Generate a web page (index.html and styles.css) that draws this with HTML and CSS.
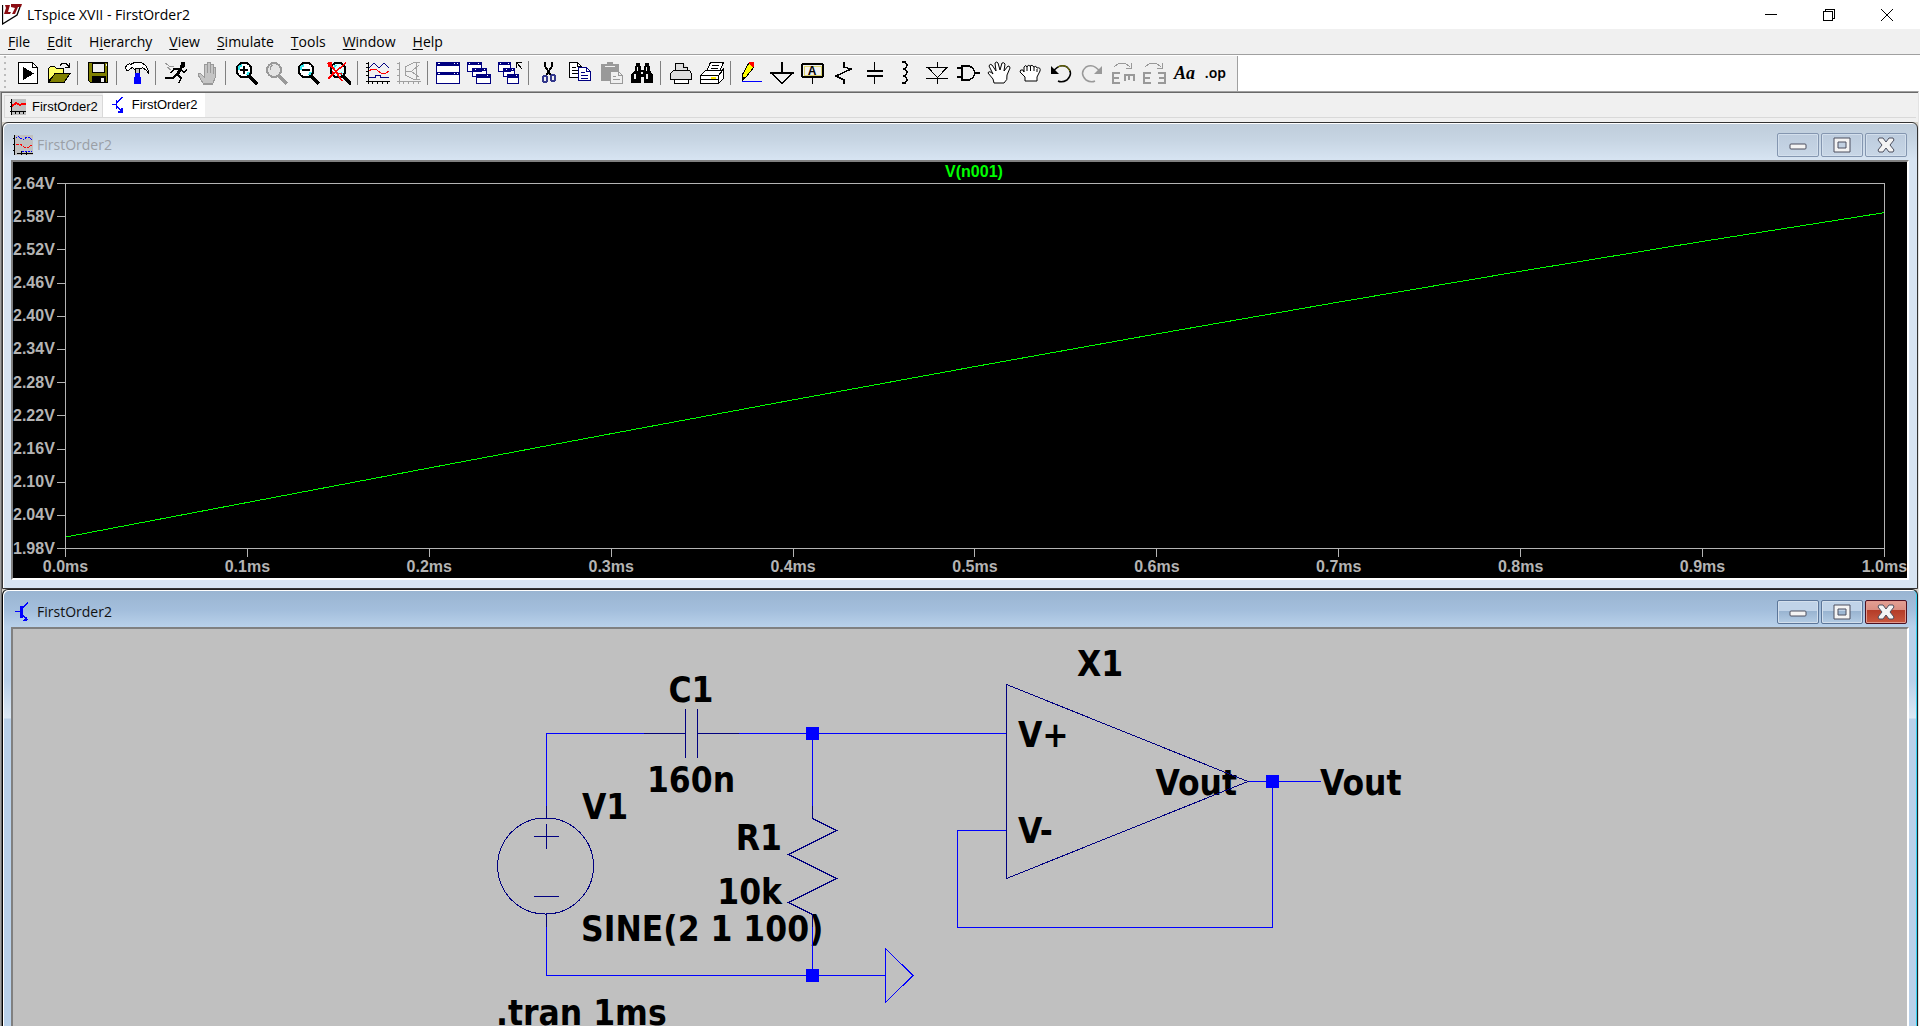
FILE: index.html
```html
<!DOCTYPE html>
<html lang="en">
<head>
<meta charset="utf-8">
<title>LTspice XVII - FirstOrder2</title>
<link rel="stylesheet" href="styles.css">
</head>
<body>
<header class="titlebar">
  <svg class="logo" viewBox="0 0 20 21"><path d="M.5 1v19L15 11 18 3" fill="none" stroke="#000" stroke-width="1.300"/><path d="M3 1H8L6 8h3l-1 2H2L4 4zM9 0H20L19 3H16L13 10H10L13 4 9 3z" fill="#8b0d12"/></svg>
  <h1 class="app-title">LTspice XVII - FirstOrder2</h1>
  <div class="app-controls">
    <button aria-label="Minimize"><svg viewBox="0 0 12 12"><path d="M0 5.500h12" fill="none" stroke="#000"/></svg></button>
    <button aria-label="Restore"><svg viewBox="0 0 12 12"><path d="M.5 2.500h9v9h-9zM2.500 2V.5h9v9H10" fill="none" stroke="#000"/></svg></button>
    <button aria-label="Close"><svg class="smooth" viewBox="0 0 12 12"><path d="M0 0 12 12M12 0 0 12" fill="none" stroke="#000"/></svg></button>
  </div>
</header>
<nav class="menubar" aria-label="Main menu">
  <button><u>F</u>ile</button><button><u>E</u>dit</button><button>H<u>i</u>erarchy</button><button><u>V</u>iew</button><button><u>S</u>imulate</button><button><u>T</u>ools</button><button><u>W</u>indow</button><button><u>H</u>elp</button>
</nav>
<div class="toolbar-row">
<div class="toolbar" role="toolbar" aria-label="Tools">
  <button aria-label="New schematic"><svg viewBox="0 0 24 24"><path d="M2.500 1.500h14l5 5v16h-19z" fill="#fff" stroke="#000"/><path d="M16.500 1.500v5h5" fill="none" stroke="#000"/><path d="M7 6v13l11-6.500z" fill="#000"/></svg></button>
  <button aria-label="Open"><svg viewBox="0 0 24 24"><path d="M1.500 20.500V7.500l2-2h4l2 2h7v5H8z" fill="#ff6" stroke="#000"/><path d="M1.500 21.500 8 12.500h15l-6 9z" fill="#808000" stroke="#000"/><path d="M13 4.500 15 2.500h4l3 3V2m0 4h-4" fill="none" stroke="#000"/></svg></button>
  <i class="sep"></i>
  <button aria-label="Save"><svg viewBox="0 0 24 24"><path d="M2.500 1.500h19v20h-17l-2-2z" fill="#808000" stroke="#000"/><path d="M6 2h12v9H6z" fill="#efefef" stroke="#000"/><path d="M6 15h14v7H6z" fill="#000"/><path d="M15 17h3v4h-3zM20 3h1v2h-1z" fill="#efefef"/></svg></button>
  <i class="sep"></i>
  <button aria-label="Control panel"><svg viewBox="0 0 24 24"><path d="M1.500 4.500 4.500 2.500 5.500 3.500 9.500 1.500h7l4 3 3 5v3l-2-3-4-3-3 2h-5l-2-2-2 1-2 2h-2l-1-3z" fill="#fff" stroke="#000"/><path d="M10.500 7.500h4v6h-4z" fill="#c0c0c0" stroke="#000"/><path d="M10 12h5v4h1v7h-7v-7h1z" fill="#00f"/></svg></button>
  <i class="sep"></i>
  <button aria-label="Run"><svg viewBox="0 0 24 24"><path d="M17 1h4v4l-2 2h-3z" fill="#000"/><path d="M17 7 13 14" fill="none" stroke="#000" stroke-width="3"/><path d="M13 13 17 17 15 22M13 13 9 17H1M16 8H10L7 12M17 9l3 2 3-2" fill="none" stroke="#000" stroke-width="1.500"/><path d="M1 2l4 3 5 1M3 6l4 3" fill="none" stroke="#999"/></svg></button>
  <button aria-label="Halt"><svg viewBox="0 0 24 24"><path d="M8 22h10l2-5V6h-2v7-10h-3v9-11h-3v11-9H9v13l-4-4H3v2z" fill="#c4c4c4" stroke="#999"/><path d="M8 22.500h10" stroke="#999" stroke-width="2"/></svg></button>
  <i class="sep"></i>
  <button aria-label="Zoom in"><svg viewBox="0 0 24 24"><circle cx="10" cy="9" r="7.500" fill="#fff" stroke="#000" stroke-width="2"/><path d="M5 9V6l3-2M15 11l-2 3" stroke="#2fe9ee" stroke-width="2" fill="none"/><path d="M6 9h8M10 5v8" stroke="#000" stroke-width="2"/><path d="m15 15 8 8" stroke="#000" stroke-width="4"/></svg></button>
  <button aria-label="Pan zoom"><svg viewBox="0 0 24 24"><circle cx="9" cy="9" r="7" fill="#e4e4e4" stroke="#999" stroke-width="2"/><path d="M5 9V6l3-2" stroke="#999" fill="none"/><path d="m14 15 8 8" stroke="#999" stroke-width="4"/></svg></button>
  <button aria-label="Zoom out"><svg viewBox="0 0 24 24"><circle cx="10" cy="9" r="7.500" fill="#fff" stroke="#000" stroke-width="2"/><path d="M5 9V6l3-2M15 11l-2 3" stroke="#2fe9ee" stroke-width="2" fill="none"/><path d="M6 9h8" stroke="#000" stroke-width="2"/><path d="m15 15 8 8" stroke="#000" stroke-width="4"/></svg></button>
  <button aria-label="Zoom full extents"><svg viewBox="0 0 24 24"><circle cx="11" cy="9" r="7.500" fill="#dff" stroke="#000" stroke-width="2"/><path d="M6 8l3-4M15 12l-2 2" stroke="#2fe9ee" stroke-width="2" fill="none"/><path d="m16 15 8 8" stroke="#000" stroke-width="4"/><path d="M1 2l6 6 8 12M19 2 6 13 1 18M5 11l10 2" stroke="#f00" stroke-width="1.500" fill="none"/><path d="M1 1h4v5H1z" fill="#f00"/></svg></button>
  <i class="sep"></i>
  <button aria-label="Autorange"><svg viewBox="0 0 24 24"><path d="M2.500 1v22M0 20.500h24M0 2.500h2M0 6.500h2M0 10.500h2M0 14.500h2M6.500 21v2M11.500 21v2M16.500 21v2M21.500 21v2" stroke="#000"/><path d="M3 7 8 2l5 5 5-5 5 5M3 16.500h6v-2h5v2h9" fill="none" stroke="#000080"/><path d="M3 10l3-2 5 1 4 3h5l3-2" fill="none" stroke="#f00"/></svg></button>
  <button aria-label="Smith chart"><svg viewBox="0 0 24 24"><path d="M2.500 1v22M0 20.500h24M0 2.500h2M0 8.500h2M0 14.500h2M6.500 21v2M11.500 21v2M16.500 21v2M21.500 21v2M23 1.500h-6L8 6v8l8 4h7M19.500 2v16M8 10.500h7M15 10l7-6M15 11l7 5" fill="none" stroke="#a0a0a0"/></svg></button>
  <i class="sep"></i>
  <button aria-label="Tile windows"><svg viewBox="0 0 24 24"><path d="M.5 1.500h23v10H.5zM.5 12.500h23v10H.5z" fill="#fff" stroke="#000080"/><path d="M0 1h24v4H0zM0 11h24v3H0z" fill="#000080"/><path d="M2 2h2v1H2zM18 2h1v1h-1zM21 2h1v1h-1zM2 12h2v1H2zM18 12h1v1h-1zM21 12h1v1h-1z" fill="#fff"/></svg></button>
  <button aria-label="Cascade windows"><svg viewBox="0 0 24 24"><path d="M.5 1.500h14v9H.5zM5.500 7.500h14v8h-14zM9.500 13.500h14v9h-14z" fill="#fff" stroke="#000080"/><path d="M0 1h15v3H0zM5 7h15v3H5zM9 13h15v4H9z" fill="#000080"/><path d="M2 2h1v1H2zM11 2h1v1h-1zM8 8h1v1H8zM17 8h1v1h-1zM20 14h1v1h-1z" fill="#fff"/></svg></button>
  <button aria-label="Close windows"><svg viewBox="0 0 24 24"><path d="M.5 1.500h12v9H.5zM5.500 7.500h11v8h-11zM9.500 13.500h11v9h-11z" fill="#fff" stroke="#000080"/><path d="M0 1h13v3H0zM5 7h12v3H5zM9 13h12v4H9z" fill="#000080"/><path d="M2 2h1v1H2zM10 2h1v1h-1zM8 8h1v1H8zM14 8h1v1h-1zM18 14h1v1h-1z" fill="#fff"/><path d="M18 1.500h6M18.500 1v6M19 2l5 6" stroke="#000" fill="none"/></svg></button>
  <i class="sep"></i>
  <button aria-label="Cut"><svg viewBox="0 0 24 24"><path d="M8 1v4l6 10M15 1v4L9 15" stroke="#000" stroke-width="2" fill="none"/><ellipse cx="8" cy="18" rx="2.500" ry="3.500" fill="none" stroke="#33388c" stroke-width="2"/><ellipse cx="16" cy="17" rx="2.500" ry="3.500" fill="none" stroke="#33388c" stroke-width="2"/></svg></button>
  <button aria-label="Copy"><svg viewBox="0 0 24 24"><path d="M1.500 1.500h8l4 4v11h-12z" fill="#fff" stroke="#000"/><path d="M9.500 1.500v4h4M4 6.500h4M4 9.500h6M4 12.500h6" fill="none" stroke="#000"/><path d="M10.500 6.500h8l4 4v9h-12z" fill="#fff" stroke="#000080"/><path d="M18.500 6.500v4h4M13 11.500h4M13 14.500h7M13 17.500h7" fill="none" stroke="#000080"/></svg></button>
  <button aria-label="Paste"><svg viewBox="0 0 24 24"><path d="M2 3h6V1h6v2h6v17H2z" fill="#999"/><path d="M6 5.500h10" stroke="#efefef"/><path d="M11.500 10.500h8l4 4v8h-12z" fill="#efefef" stroke="#999"/><path d="M19.500 10.500v4h4M14 15.500h3M14 18.500h7" fill="none" stroke="#999"/></svg></button>
  <button aria-label="Find"><svg viewBox="0 0 24 24"><path d="M6 2h4v3h1v4h3V5h1V2h4v3h1v4l3 5v8h-9v-6h-3v6H1v-8l4-5V5h1z" fill="#000"/><path d="M7 6h1v4H7zM16 6h1v4h-1zM4 13h2v5H4zM16 13h2v5h-2zM11 11h2v2h-2z" fill="#efefef"/></svg></button>
  <i class="sep"></i>
  <button aria-label="Print"><svg viewBox="0 0 24 24"><path d="M6.500 10V2.500h8l4 4V10" fill="#ddd" stroke="#000"/><path d="M14.500 2v4h4M4.500 9.500h16l2 3v6h-3v4h-14v-4h-4v-6z" fill="#ddd" stroke="#000"/><path d="M5.500 18.500h14v4h-14z" fill="#fff" stroke="#000"/></svg></button>
  <button aria-label="Print setup"><svg viewBox="0 0 24 24"><path d="M6.500 10 10.500 1.500h13L19.500 10M.5 14.500l5-5h16l2-2v10l-5 5h-18z" fill="#fff" stroke="#000"/><path d="M.5 14.500h18l5-6M18.500 15v8M12 4.500h7M11 7.500h7M0 18.500h18" fill="none" stroke="#000"/><path d="M11 16.500h5" stroke="#ffe900" stroke-width="2"/></svg></button>
  <i class="sep"></i>
  <button aria-label="Draw wire"><svg viewBox="0 0 24 24"><path d="M3.500 18.500v-5l6-11h5v4l-7 9z" fill="#ff0" stroke="#000"/><path d="M3 20v-5l4 2z" fill="#000"/><path d="M10 1h5v5h-2l-3-3z" fill="#f00"/><path d="M3 20.500h20" stroke="#00f"/></svg></button>
  <button aria-label="Ground"><svg viewBox="0 0 24 24"><path d="M12 1v11M1 12h22L12 22z" fill="none" stroke="#000" stroke-width="1.500"/></svg></button>
  <button aria-label="Label net"><svg viewBox="0 0 24 24"><rect x="1" y="3" width="21" height="13" rx="2" fill="#efefef" stroke="#000" stroke-width="2"/><path d="M3 5h17v9H3z" fill="none" stroke="#dcd36a"/><path d="M11.500 16v7" stroke="#000"/><text class="icon-text" x="11" y="14" text-anchor="middle">A</text></svg></button>
  <button aria-label="Resistor"><svg viewBox="0 0 24 24"><path d="M12 1v5l7 2L4 15l8 4v4" fill="none" stroke="#000" stroke-width="1.500"/></svg></button>
  <button aria-label="Capacitor"><svg viewBox="0 0 24 24"><path d="M11.500 1v9M11.500 16v7" stroke="#000"/><path d="M4 10h16M4 15h16" stroke="#000" stroke-width="2"/></svg></button>
  <button aria-label="Inductor"><svg viewBox="0 0 24 24"><path d="M8 1h3q4 3 0 7H9h2q4 3 0 7H9h2q4 4 0 7H8" fill="none" stroke="#000" stroke-width="1.500"/></svg></button>
  <button aria-label="Diode"><svg viewBox="0 0 24 24"><path d="M12.500 1v5M12.500 17v6M1 6.500h22M3 6.500 12.500 16.500 22 6.500M1 17.500h22" fill="none" stroke="#000"/></svg></button>
  <button aria-label="Component"><svg viewBox="0 0 24 24"><path d="M6 5h7q5 2 6 7-1 5-6 7H6zM1 7h5M1 16h5M19 12h5" fill="none" stroke="#000" stroke-width="1.500"/></svg></button>
  <button aria-label="Move"><svg class="smooth" viewBox="0 0 24 24"><path d="M7 22 6 18 1 12q1-3 5 1L2 5q1-3 3-1l4 6L8 2q2-2 3 0l2 7 2-7q2-1 3 1l-1 7 4-5q2 0 2 2l-3 7q1 5-3 8z" fill="#fff" stroke="#000"/></svg></button>
  <button aria-label="Drag"><svg class="smooth" viewBox="0 0 24 24"><path d="M7 20v-4L2 11q0-3 3-2l1 2V6q2-3 3 0 1-3 3-1 2-2 4 1 2-2 3 1 4-1 3 3l-3 6v4z" fill="#fff" stroke="#000"/><path d="M9 6v4M12.500 5v5M16 6v4M19 8v3" stroke="#000"/></svg></button>
  <button aria-label="Undo"><svg class="smooth" viewBox="0 0 24 24"><path d="M4 11Q10 2 18 6q7 6 0 13-5 3-9 1" fill="none" stroke="#000" stroke-width="1.500"/><path d="M9 6q8-4 12 4" fill="none" stroke="#808000"/><path d="M2 5v8h8z" fill="#000"/></svg></button>
  <button aria-label="Redo"><svg class="smooth" viewBox="0 0 24 24"><path d="M20 11Q14 2 6 6q-7 6 0 13 5 3 9 1" fill="none" stroke="#999" stroke-width="1.500"/><path d="M22 5v8h-8z" fill="#999"/></svg></button>
  <button aria-label="Rotate"><svg viewBox="0 0 24 24"><path d="M9 11.500H2v10h7M2 16.500h6M13.500 20v-6h9v6M18 14v5" fill="none" stroke="#999" stroke-width="2"/><path d="M3 6l5-4h6l5 4M20 2v5h-5" fill="none" stroke="#999"/></svg></button>
  <button aria-label="Mirror"><svg viewBox="0 0 24 24"><path d="M9 11.500H2v10h7M2 16.500h6M16 11.500h7v10h-7M17 16.500h6" fill="none" stroke="#999" stroke-width="2"/><path d="M3 6l5-4h6l5 4M20 2v5h-5" fill="none" stroke="#999"/></svg></button>
  <button class="text-tool">Aa</button>
  <button class="directive-tool">.op</button>
</div>
</div>
<div class="workspace">
<div class="tabs" role="tablist">
  <button class="tab" role="tab"><svg viewBox="0 0 16 16"><path d="M1 0h15v16H1z" fill="#c0c0c0"/><path d="M1.500 0v16M0 12.500h16M0 3.500h1M0 7.500h1M5.500 13v2M9.500 13v2M13.500 13v2" stroke="#000"/><path d="M2 7l4-3 4 2 2-1h4" fill="none" stroke="#f00" stroke-width="2"/></svg>FirstOrder2</button>
  <button class="tab active" role="tab" aria-selected="true"><svg viewBox="0 0 16 16"><path d="M4.500 3v9M0 7.500h4M5 6l5-6M5 9l5 6M10 11v4H6" fill="none" stroke="#00f" stroke-width="1.500"/></svg>FirstOrder2</button>
</div>
<main class="mdi">
<section class="win">
  <div class="win-title">
    <svg class="win-icon" viewBox="0 0 20 20"><path d="M1 0h19v20H1z" fill="#c0c0c0"/><path d="M1.500 0v20M0 3.500h1M0 9.500h1M0 15.500h1M4 18.500h16M8.500 16v4M13.500 16v4" stroke="#000"/><path d="M3 3l2-2 5 4 4-3h2l3 3M9 16.500h10" fill="none" stroke="#00f" stroke-dasharray="2 1"/><path d="M3 10l4-1 4 3h5l3-2" fill="none" stroke="#f00" stroke-dasharray="3 1"/></svg>
    <h2>FirstOrder2</h2>
    <div class="win-buttons">
      <button aria-label="Minimize"><svg viewBox="0 0 18 16"><rect class="glyph" x="1" y="7" width="16" height="5" rx="1"/></svg></button>
      <button aria-label="Maximize"><svg viewBox="0 0 18 16"><path class="glyph" fill-rule="evenodd" d="M1 1h16v14H1zM5 5v6h8V5z"/></svg></button>
      <button aria-label="Close"><svg viewBox="0 0 18 16"><path class="glyph" d="M2 1h4l3 4 3-4h4l1 2-4 5 4 5-1 2h-4l-3-4-3 4H2l-1-2 4-5-4-5z"/></svg></button>
    </div>
  </div>
  <div class="client plot">
    <h3 class="trace">V(n001)</h3>
    <ul class="y-axis"><li>2.64V</li><li>2.58V</li><li>2.52V</li><li>2.46V</li><li>2.40V</li><li>2.34V</li><li>2.28V</li><li>2.22V</li><li>2.16V</li><li>2.10V</li><li>2.04V</li><li>1.98V</li></ul>
    <div class="plot-area"><svg viewBox="0 0 1000 365" preserveAspectRatio="none"><polyline vector-effect="non-scaling-stroke" fill="none" stroke="#0f0" points="0,353.9 100,319.2 200,284.6 300,250.3 400,216.4 500,183 600,150.3 700,118.4 800,87.5 900,57.6 1000,28.8"/></svg></div>
    <ul class="x-axis"><li>0.0ms</li><li>0.1ms</li><li>0.2ms</li><li>0.3ms</li><li>0.4ms</li><li>0.5ms</li><li>0.6ms</li><li>0.7ms</li><li>0.8ms</li><li>0.9ms</li><li>1.0ms</li></ul>
  </div>
</section>
<section class="win current">
  <div class="win-title">
    <svg class="win-icon" viewBox="0 0 20 20"><path d="M8 4v12" stroke="#00f" stroke-width="3"/><path d="M2 9.500h5M9 6l6-5M9 12l5 6" fill="none" stroke="#00f" stroke-width="1.500"/><path d="M14 14v5h-5z" fill="#00f"/></svg>
    <h2>FirstOrder2</h2>
    <div class="win-buttons">
      <button aria-label="Minimize"><svg viewBox="0 0 18 16"><rect class="glyph" x="1" y="7" width="16" height="5" rx="1"/></svg></button>
      <button aria-label="Maximize"><svg viewBox="0 0 18 16"><path class="glyph" fill-rule="evenodd" d="M1 1h16v14H1zM5 5v6h8V5z"/></svg></button>
      <button class="close" aria-label="Close"><svg viewBox="0 0 18 16"><path class="glyph" d="M2 1h4l3 4 3-4h4l1 2-4 5 4 5-1 2h-4l-3-4-3 4H2l-1-2 4-5-4-5z"/></svg></button>
    </div>
  </div>
  <div class="client schematic">
    <svg role="img" aria-label="Schematic">
      <g transform="translate(-13 -629)">
        <g class="labels">
          <text x="691" y="702" text-anchor="middle">C1</text>
          <text x="691" y="792" text-anchor="middle">160n</text>
          <text x="582" y="819">V1</text>
          <text x="782" y="850" text-anchor="end">R1</text>
          <text x="782" y="904" text-anchor="end">10k</text>
          <text x="581" y="941">SINE(2 1 100)</text>
          <text x="496" y="1025">.tran 1ms</text>
          <text x="1100" y="676" text-anchor="middle">X1</text>
          <text x="1018" y="747">V+</text>
          <text x="1018" y="843">V-</text>
          <text x="1237" y="795" text-anchor="end">Vout</text>
          <text x="1320" y="795">Vout</text>
        </g>
        <path class="wire" d="M546.500 806V733.500H644M739 733.500H1006M812.500 733V806M812.500 927V975M546.500 927V975.500H885M1006 830.500H957.500V927.500H1272.500V781M1248 781.500H1321M885.500 948.500V1002.500L913 975.500Z"/>
        <path class="part" d="M546.500 806V818M546.500 914V927M644 733.500H685M698 733.500H739M685.500 709V758M697.500 709V758M812.500 806V818.500L836.500 830.500 788.500 854.500 836.500 878.500 788.500 902.500 812.500 914.500V927M534 836.500H559M546.500 824V849M534 896.500H559M1006.500 684.500V878.500L1248 781.500Z"/>
        <circle class="part" cx="545.500" cy="866" r="48"/>
        <path class="node" d="M806 727h13v13h-13zM806 969h13v13h-13zM1266 775h13v13h-13z"/>
      </g>
    </svg>
  </div>
</section>
</main>
</div>
</body>
</html>
```
FILE: styles.css
```css
* { box-sizing: border-box; }
html, body { height: 100%; }
body {
  margin: 0;
  display: flex;
  flex-direction: column;
  overflow: hidden;
  background: #fff;
  color: #000;
  font: 14px/20px "Open Sans", "Noto Sans", sans-serif;
}
h1, h2, h3, ul { margin: 0; padding: 0; font: inherit; list-style: none; }
button { margin: 0; padding: 0; border: 0; background: none; color: inherit; font: inherit; }
svg { display: block; shape-rendering: crispEdges; }
.smooth { shape-rendering: auto; }

.titlebar { display: flex; align-items: center; height: 29px; padding: 0 4px 0 2px; }
.logo { width: 20px; height: 21px; shape-rendering: auto; }
.app-title { padding-left: 5px; }
.app-controls { display: flex; margin-left: auto; }
.app-controls button { display: grid; place-items: center; width: 58px; height: 27px; }
.app-controls svg { width: 12px; height: 12px; }

.menubar {
  display: flex;
  gap: 17px;
  height: 26px;
  padding: 0 8px;
  background: #f0f0f0;
  border-bottom: 1px solid #a0a0a0;
}
.menubar u { text-decoration: underline 1px #000; text-underline-offset: 2px; text-decoration-skip-ink: none; }

.toolbar-row { display: flex; height: 36px; padding-top: 1px; }
.toolbar {
  display: flex;
  align-items: flex-start;
  padding: 0 6px 0 12px;
  background: radial-gradient(circle, #bbb 1px, transparent 1px) 3px 4px / 4px 6px repeat-y #f0f0f0;
  border-right: 1px solid #a0a0a0;
}
.toolbar button { display: grid; place-items: center; width: 31px; height: 34px; }
.toolbar svg { width: 24px; height: 24px; }
.sep { width: 1px; height: 24px; margin: 5px 4px 0 3px; background: #808080; }
.icon-text { font: bold 12px "Liberation Sans", sans-serif; }
.toolbar .text-tool { font: italic bold 18px/24px "Liberation Serif", serif; }
.toolbar .directive-tool { font: 600 14px/24px "Noto Sans", sans-serif; }

.workspace {
  flex: 1;
  min-height: 0;
  display: flex;
  flex-direction: column;
  margin-right: 1px;
  border-style: solid;
  border-color: #a0a0a0 #e3e3e3 #a0a0a0 #a0a0a0;
  border-width: 1px 1px 0;
  background: #f0f0f0;
  box-shadow: inset 1px 1px #696969;
  padding: 1px 0 0 1px;
}
.tabs {
  display: flex;
  align-items: flex-end;
  height: 25px;
  margin: 0 2px 0 2px;
  border-bottom: 1px solid #d9d9d9;
}
.tab {
  display: flex;
  align-items: center;
  gap: 6px;
  height: 22px;
  padding: 0 4px 0 5px;
  border: 1px solid #d9d9d9;
  border-bottom: 0;
  font: 13px/16px "Liberation Sans", Arial, sans-serif;
}
.tab.active { height: 24px; padding: 0 7px 2px 8px; gap: 4px; background: #fff; align-self: flex-start; border-color: #fff; }
.tab svg { width: 16px; height: 16px; }

.mdi {
  flex: 1;
  min-height: 0;
  display: grid;
  grid-template-rows: 31fr 29fr;
  margin-top: 4px;
  background: #d4d0c8;
}
.win {
  min-height: 0;
  display: flex;
  flex-direction: column;
  padding: 0 8px 8px;
  border: 1px solid #333;
  border-radius: 6px 6px 0 0;
  box-shadow: inset 1px 1px #fff;
  background: linear-gradient(#bfcddb, #c6d4e2 16px, #d7e4f2 37px);
}
.win.current {
  padding-bottom: 0;
  border-color: #222 #222 #222 #000;
  border-bottom: 0;
  box-shadow: inset 1px 1px #fff, inset -1px 0 #35d2f2;
  background: linear-gradient(#99b4d1, #a3bedc 20px, #b9d1ea 37px, #b9d1ea 90px, #dce8f4 128px, #b9d1ea 129px);
}
.win-title { display: flex; align-items: center; height: 37px; padding: 6px 2px 0; color: #9a9fa6; }
.current .win-title { color: #111; }
.win-icon { width: 20px; height: 20px; }
.win-title h2 { padding-left: 4px; }
.win-buttons { display: flex; gap: 2px; margin-left: auto; }
.win-buttons button {
  display: grid;
  place-items: center;
  width: 42px;
  height: 24px;
  border: 1px solid #8496b0;
  border-radius: 2px;
  box-shadow: inset 0 0 0 1px #d3dfec;
  background: linear-gradient(#bccbdd, #c8d6e6);
}
.current .win-buttons button { border-color: #5c7699; background: linear-gradient(#c0d3e8 45%, #98b3d0 45%, #b4cce4); }
.current .win-buttons .close { border-color: #4c1020; box-shadow: inset 0 0 0 1px #e29a8e; background: linear-gradient(#e3a094, #d98d80 42%, #b43c28 42%, #c8583f); }
.win-buttons svg { width: 18px; height: 16px; shape-rendering: auto; }
.glyph { fill: #f4f4f4; stroke: #4c4f5e; }

.client {
  flex: 1;
  min-height: 0;
  border-style: solid;
  border-width: 2px;
  border-color: #808080 #fff #fff #808080;
}
.plot {
  display: grid;
  grid-template: 21px 1fr 29px / 52px 1fr;
  padding-right: 22px;
  background: #000;
  color: #b4b4b4;
  font: bold 16px/16px "Liberation Sans", Arial, sans-serif;
}
.trace { grid-column: 1 / -1; padding-left: 50px; line-height: 19px; text-align: center; color: #0f0; }
.y-axis { display: flex; flex-direction: column; justify-content: space-between; }
.y-axis li { display: flex; justify-content: space-between; align-items: center; height: 1px; }
.y-axis li::after { content: ""; width: 8px; height: 1px; background: #b4b4b4; }
.plot-area { min-height: 0; border: 1px solid #b4b4b4; }
.plot-area svg { width: 100%; height: 100%; }
.x-axis { grid-column: 2; display: flex; justify-content: space-between; }
.x-axis li { display: flex; flex-direction: column; align-items: center; gap: 2px; width: 1px; }
.x-axis li::before { content: ""; width: 1px; height: 8px; background: #b4b4b4; }

.schematic { border-bottom: 0; background: #c0c0c0; overflow: hidden; }
.schematic svg { width: 100%; height: 100%; }
.labels { font: bold 35px "DejaVu Sans Condensed", "DejaVu Sans", sans-serif; }
.wire { fill: none; stroke: #00f; }
.part { fill: none; stroke: #000080; }
.node { fill: #00f; }
```
